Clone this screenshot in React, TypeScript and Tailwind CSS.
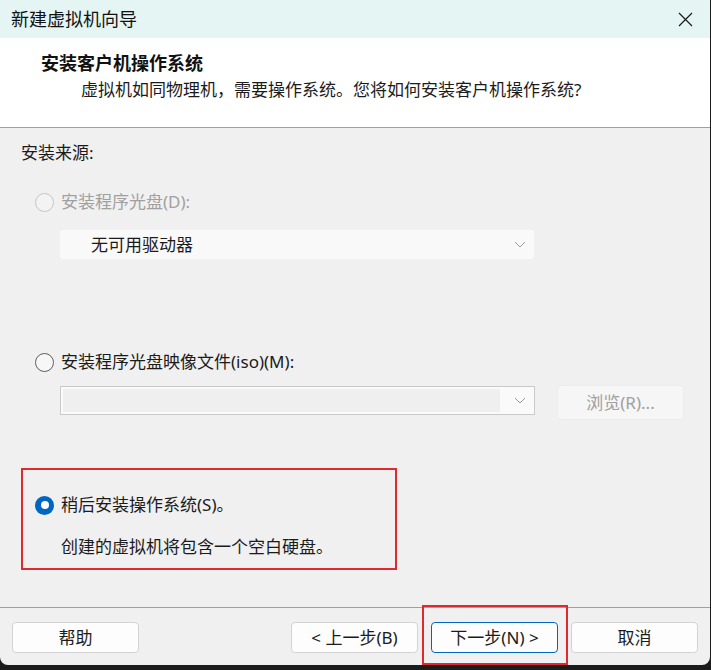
const font = "font-['Noto_Sans','Noto_Sans_CJK_SC',sans-serif]";

function Radio({ state }: { state: "disabled" | "off" | "on" }) {
  if (state === "on") {
    return (
      <span className="w-[19px] h-[19px] rounded-full bg-[#0067c0] flex items-center justify-center shrink-0">
        <span className="w-[8px] h-[8px] rounded-full bg-white" />
      </span>
    );
  }
  return (
    <span
      className={
        state === "disabled"
          ? "w-[19px] h-[19px] rounded-full border border-[#c6c6c6] bg-[#f3f3f3] shrink-0"
          : "w-[19px] h-[19px] rounded-full border border-[#5d5d5d] bg-[#f7f7f7] shrink-0"
      }
    />
  );
}

function Chevron() {
  return (
    <svg width="12" height="7" viewBox="0 0 12 7" fill="none">
      <path d="M1 1L6 6L11 1" stroke="#9a9a9a" strokeWidth="1" />
    </svg>
  );
}

function Btn({ children, focus }: { children: React.ReactNode; focus?: boolean }) {
  return (
    <button
      className={
        "w-[127px] h-[31px] rounded-[4px] bg-[#fdfdfd] text-[17px] text-[#1b1b1b] flex items-center justify-center " +
        (focus ? "border border-[#0067c0]" : "border border-[#d3d3d3]")
      }
    >
      {children}
    </button>
  );
}

export default function App() {
  return (
    <div className={`w-[711px] h-[670px] bg-[#1c1c1c] overflow-hidden relative ${font}`}>
      <div className="w-[710px] h-[665px] bg-[#f0f0f0] rounded-b-[8px] overflow-hidden flex flex-col">
        {/* title bar */}
        <div className="h-[38px] bg-[#e5f5f3] flex items-center justify-between pl-[11px] pr-[17px] shrink-0">
          <span className="text-[18px] text-[#111] leading-none">新建虚拟机向导</span>
          <svg width="15" height="15" viewBox="0 0 15 15" fill="none">
            <path d="M1 1L14 14M14 1L1 14" stroke="#1a1a1a" strokeWidth="1.2" />
          </svg>
        </div>

        {/* header */}
        <div className="h-[90px] bg-white border-b border-[#a0a0a0] pl-[41px] pt-[13px] shrink-0">
          <div className="text-[18px] font-bold leading-[24px] text-[#111]">安装客户机操作系统</div>
          <div className="text-[17px] leading-[24px] mt-[3px] ml-[40px] text-[#1b1b1b]">
            虚拟机如同物理机，需要操作系统。您将如何安装客户机操作系统?
          </div>
        </div>

        {/* body */}
        <div className="flex-1 pl-[21px] pt-[13px] text-[17px] text-[#1b1b1b]">
          <div className="leading-[24px]">安装来源:</div>

          <div className="mt-[25px] ml-[14px] flex items-center gap-[7px] h-[24px]">
            <Radio state="disabled" />
            <span className="text-[#a0a0a0]">安装程序光盘(D):</span>
          </div>
          <div className="mt-[16px] ml-[39px] w-[474px] h-[29px] bg-[#f9f9f9] rounded-[3px] flex items-center justify-between pl-[31px] pr-[8px]">
            <span>无可用驱动器</span>
            <Chevron />
          </div>

          <div className="mt-[91px] ml-[14px] flex items-center gap-[7px] h-[24px]">
            <Radio state="off" />
            <span>安装程序光盘映像文件(iso)(M):</span>
          </div>
          <div className="mt-[11px] ml-[39px] flex items-start">
            <div className="mt-[1px] w-[475px] h-[29px] border border-[#c9c9c9] bg-[#fafafa] flex items-center p-[2px] pr-[8px]">
              <div className="flex-1 h-full bg-[#efefef]" />
              <div className="w-[26px] flex justify-end">
                <Chevron />
              </div>
            </div>
            <div className="ml-[22px] w-[127px] h-[35px] rounded-[4px] bg-[#f6f6f6] border border-[#ececec] flex items-center justify-center text-[#a0a0a0]">
              浏览(R)...
            </div>
          </div>

          <div className="mt-[48px] w-[376px] h-[102px] border-2 border-[#dc2a2f] pl-[12px] pt-[23px]">
            <div className="flex items-center gap-[7px] h-[24px]">
              <Radio state="on" />
              <span>稍后安装操作系统(S)。</span>
            </div>
            <div className="mt-[18px] ml-[26px] leading-[24px]">创建的虚拟机将包含一个空白硬盘。</div>
          </div>
        </div>

        {/* footer */}
        <div className="h-[58px] border-t border-[#a0a0a0] shrink-0 flex items-start justify-between px-[12px] pt-[14px]">
          <Btn>帮助</Btn>
          <div className="flex gap-[13px]">
            <Btn>&lt; 上一步(B)</Btn>
            <Btn focus>下一步(N) &gt;</Btn>
            <Btn>取消</Btn>
          </div>
        </div>
      </div>

      {/* annotation around next button */}
      <div className="absolute left-[422px] top-[605px] w-[146px] h-[60px] border-2 border-[#dc2a2f]" />
    </div>
  );
}
